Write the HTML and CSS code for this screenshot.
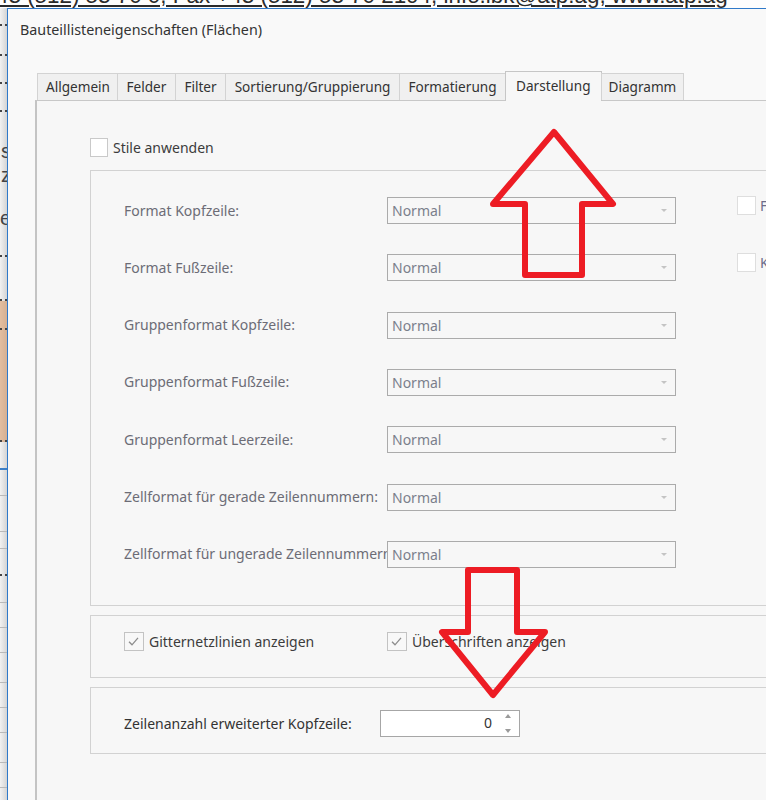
FILE: index.html
```html
<!DOCTYPE html>
<html lang="de">
<head>
<meta charset="utf-8">
<title>Bauteillisteneigenschaften (Flächen)</title>
<link rel="stylesheet" href="styles.css">
</head>
<body>
<div class="topstrip"><span class="toptext">43 (512) 53 70 0, Fax +43 (512) 53 70 2194, info.ibk@atp.ag, www.atp.ag</span></div>
<div class="main">
  <div class="strip">
    <div class="sc dot h18"></div>
    <div class="sc dot h30"></div>
    <div class="sc dot h28"></div>
    <div class="sc dot h28"></div>
    <div class="sc dot h145 letters"><span class="l1">s</span><span class="l2">z</span><span class="l3">e</span></div>
    <div class="sc dot h44"></div>
    <div class="sc dot tan h29"></div>
    <div class="sc dot tan h112"></div>
    <div class="sc blue h28"></div>
    <div class="sc grey h26"></div>
    <div class="sc grey h36"></div>
    <div class="sc grey h17"></div>
    <div class="sc dot h27"></div>
    <div class="sc grey h27"></div>
    <div class="sc grey h25"></div>
    <div class="sc grey h25"></div>
    <div class="sc grey h30"></div>
    <div class="sc grey h25"></div>
    <div class="sc grey h25"></div>
    <div class="sc grey h30"></div>
    <div class="sc grey h25"></div>
  </div>
  <div class="dialog">
    <div class="title">Bauteillisteneigenschaften (Flächen)</div>
    <div class="tabs">
      <div class="tab first">Allgemein</div>
      <div class="tab">Felder</div>
      <div class="tab">Filter</div>
      <div class="tab">Sortierung/Gruppierung</div>
      <div class="tab">Formatierung</div>
      <div class="tab active">Darstellung</div>
      <div class="tab last">Diagramm</div>
    </div>
    <div class="panel">
      <label class="check-row">
        <span class="cb"></span>
        <span class="cb-label dark">Stile anwenden</span>
      </label>

      <div class="group g1">
        <div class="fmt-grid">
          <div class="lbl">Format Kopfzeile:</div>
          <div class="combo"><span>Normal</span><i class="caret"></i></div>
          <div class="side"><span class="cb light"></span><span class="side-lbl">F</span></div>

          <div class="lbl">Format Fußzeile:</div>
          <div class="combo"><span>Normal</span><i class="caret"></i></div>
          <div class="side"><span class="cb light"></span><span class="side-lbl">K</span></div>

          <div class="lbl">Gruppenformat Kopfzeile:</div>
          <div class="combo"><span>Normal</span><i class="caret"></i></div>
          <div></div>

          <div class="lbl">Gruppenformat Fußzeile:</div>
          <div class="combo"><span>Normal</span><i class="caret"></i></div>
          <div></div>

          <div class="lbl">Gruppenformat Leerzeile:</div>
          <div class="combo"><span>Normal</span><i class="caret"></i></div>
          <div></div>

          <div class="lbl">Zellformat für gerade Zeilennummern:</div>
          <div class="combo"><span>Normal</span><i class="caret"></i></div>
          <div></div>

          <div class="lbl">Zellformat für ungerade Zeilennummern:</div>
          <div class="combo"><span>Normal</span><i class="caret"></i></div>
          <div></div>
        </div>
      </div>

      <div class="group g2">
        <label class="check-row c1">
          <span class="cb checked"><svg viewBox="0 0 19 19" width="19" height="19"><path d="M5 9.8 L8 12.8 L14 5.8" fill="none" stroke="#8c8c8c" stroke-width="1.3"/></svg></span>
          <span class="cb-label dark">Gitternetzlinien anzeigen</span>
        </label>
        <label class="check-row">
          <span class="cb checked"><svg viewBox="0 0 19 19" width="19" height="19"><path d="M5 9.8 L8 12.8 L14 5.8" fill="none" stroke="#8c8c8c" stroke-width="1.3"/></svg></span>
          <span class="cb-label dark">Überschriften anzeigen</span>
        </label>
      </div>

      <div class="group g3">
        <div class="lbl dark w256">Zeilenanzahl erweiterter Kopfzeile:</div>
        <div class="spin">
          <span class="spin-val">0</span>
          <span class="spin-btns"><i class="up"></i><i class="down"></i></span>
        </div>
      </div>
    </div>
  </div>
</div>

<svg class="arrows" width="766" height="800" viewBox="0 0 766 800">
  <polygon points="554,132 613,204 582,204 582,275 525,275 525,204 493,204" fill="none" stroke="#ed1c24" stroke-width="6" stroke-linejoin="round"/>
  <polygon points="468,570 517,570 517,632 545,632 493,695 442,632 468,632" fill="none" stroke="#ed1c24" stroke-width="6" stroke-linejoin="round"/>
</svg>
</body>
</html>
```
FILE: styles.css
```css
* { box-sizing: border-box; }
html, body { margin: 0; padding: 0; }
body {
  width: 766px;
  height: 800px;
  overflow: hidden;
  position: relative;
  background: #e9e9e9;
  font-family: "Noto Sans", "Open Sans", sans-serif;
  font-size: 14px;
  color: #333;
}

/* background application behind dialog */
.topstrip {
  height: 8px;
  overflow: hidden;
  background: #fdfdfd;
  white-space: nowrap;
}
.toptext {
  display: block;
  margin: -15px 0 0 -4px;
  font-family: "Liberation Sans", Arial, sans-serif;
  font-size: 22.4px;
  line-height: 22px;
  color: #2a2a2a;
  text-decoration: underline;
}
.main {
  display: flex;
  height: 792px;
}
.strip {
  width: 7px;
  flex: none;
  background: linear-gradient(to right, #f2f2f2, #d4d4d4);
  overflow: hidden;
}
.sc { width: 7px; }
.dot { border-bottom: 2px dotted #444; }
.grey { border-bottom: 1px solid #b9b9b9; }
.blue { border-bottom: 2px solid #3d7fc6; }
.tan { background: linear-gradient(to right, #e3bea0, #d6b092); }
.h17 { height: 17px; } .h18 { height: 18px; } .h25 { height: 25px; }
.h26 { height: 26px; } .h27 { height: 27px; } .h28 { height: 28px; }
.h29 { height: 29px; } .h30 { height: 30px; } .h36 { height: 36px; }
.h44 { height: 44px; } .h112 { height: 112px; } .h145 { height: 145px; }
.letters {
  display: flex;
  flex-direction: column;
  align-items: flex-end;
  font-family: "Liberation Sans", Arial, sans-serif;
  font-size: 20px;
  line-height: 24px;
  color: #444;
  padding-top: 27px;
}
.letters span { margin-right: -4px; }
.letters .l3 { margin-top: 19px; }

/* dialog */
.dialog {
  flex: 1;
  border-left: 1px solid #2f79c9;
  border-top: 1px solid #2f79c9;
  background: #f9f9f9;
  overflow: hidden;
  display: flex;
  flex-direction: column;
}
.title {
  padding: 11px 0 0 12px;
  line-height: 20px;
  font-size: 14.3px;
  color: #333;
}
.tabs {
  display: flex;
  align-items: flex-end;
  margin: 31px 0 -1px 29px;
  height: 30px;
  position: relative;
  z-index: 2;
}
.tab {
  height: 27px;
  margin-bottom: 1px;
  padding: 0 8.5px;
  border: 1px solid #d3d3d3;
  border-bottom: none;
  margin-right: -1px;
  background: #f0f0f0;
  font-size: 13.6px;
  line-height: 25px;
  color: #333;
  white-space: nowrap;
}
.tab.first { padding: 0 7px 0 8px; }
.tab.last { padding: 0 7px; }
.tab.active {
  height: 30px;
  margin-bottom: 0;
  padding: 0 10px;
  background: #f7f7f7;
  border-color: #c6c6c6;
  line-height: 27px;
}
.panel {
  flex: 1;
  margin-left: 27px;
  border-left: 2px solid #c4c4c4;
  border-top: 1px solid #c8c8c8;
  background: #f7f7f7;
  padding: 37px 0 0 53px;
}

/* checkboxes */
.check-row {
  display: flex;
  align-items: center;
  height: 19px;
}
.cb {
  width: 18px;
  height: 19px;
  flex: none;
  background: #fff;
  border: 1px solid #c9c9c9;
  display: block;
}
.cb.light { border-color: #dedede; width: 19px; }
.cb.checked { width: 20px; background: #f8f8f8; border-color: #c3c3c3; }
.cb.checked svg { display: block; margin: -1px 0 0 -1px; }
.cb-label { margin-left: 5px; line-height: 19px; white-space: nowrap; }
.dark { color: #3c3c3c; }

/* groups */
.group {
  width: 720px;
  border: 1px solid #d2d2d2;
  border-right: none;
}
.g1 {
  margin-top: 13px;
  padding: 26px 0 37px 33px;
}
.fmt-grid {
  display: grid;
  grid-template-columns: 263px 289px auto;
  grid-auto-rows: 27px;
  row-gap: 30.33px;
  align-items: center;
}
.lbl {
  color: #6c6c76;
  white-space: nowrap;
  overflow: hidden;
  line-height: 20px;
}
.combo {
  height: 27px;
  border: 1px solid #ababab;
  background: #f7f7f7;
  display: flex;
  align-items: center;
  justify-content: space-between;
  padding: 0 8px 0 4px;
  color: #7b7f8c;
}
.caret {
  width: 0;
  height: 0;
  border-left: 3px solid transparent;
  border-right: 3px solid transparent;
  border-top: 3px solid #c4c4c4;
}
.side {
  display: flex;
  align-items: center;
  margin-left: 61px;
  margin-top: -11px;
}
.side-lbl { margin-left: 4px; color: #6c6c8a; }

.g2 {
  margin-top: 9px;
  height: 63px;
  padding: 16px 0 0 33px;
  display: flex;
}
.g2 .c1 { width: 263px; }

.g3 {
  margin-top: 9px;
  height: 67px;
  padding: 22px 0 0 33px;
  display: flex;
  align-items: flex-start;
}
.w256 { width: 256px; line-height: 27px; color: #333; }
.spin {
  width: 140px;
  height: 27px;
  background: #fff;
  border: 1px solid #a6a6a6;
  display: flex;
  align-items: center;
  justify-content: flex-end;
  padding-right: 8px;
}
.spin-val { color: #333; margin-right: 13px; line-height: 20px; }
.spin-btns {
  display: flex;
  flex-direction: column;
  justify-content: space-between;
  height: 19px;
}
.spin-btns i {
  display: block;
  width: 0;
  height: 0;
  border-left: 3px solid transparent;
  border-right: 3px solid transparent;
}
.spin-btns .up { border-bottom: 4px solid #9a9a9a; }
.spin-btns .down { border-top: 4px solid #9a9a9a; }

.arrows {
  position: absolute;
  left: 0;
  top: 0;
  pointer-events: none;
}
```
